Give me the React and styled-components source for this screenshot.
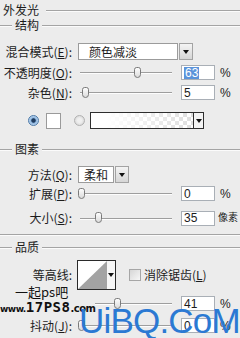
import React from 'react';
import styled, { createGlobalStyle } from 'styled-components';

const GlobalStyle = createGlobalStyle`
  html, body {
    margin: 0;
    padding: 0;
    background: #ececec;
  }
  body {
    font-family: "Noto Sans CJK SC", "Liberation Sans", sans-serif;
  }
`;

const Panel = styled.div`
  position: relative;
  width: 240px;
  height: 338px;
  overflow: hidden;
  background: #ececec;
  color: #1c1c1c;
  font-size: 12px;
  line-height: 12px;
  display: flex;
  flex-direction: column;
`;

const Legend = styled.div`
  display: flex;
  align-items: center;
  flex: none;
  height: ${(p) => p.$h || 12}px;
  margin-top: ${(p) => p.$mt || 0}px;
  padding-left: ${(p) => (p.$nested ? 0 : 3)}px;
  gap: ${(p) => (p.$nested ? 3 : 7)}px;
  white-space: nowrap;

  &::before {
    content: '';
    display: ${(p) => (p.$nested ? 'block' : 'none')};
    width: 12px;
    height: 1px;
    background: #a4a4a4;
    box-shadow: 0 1px 0 #fbfbfb;
  }

  &::after {
    content: '';
    flex: 1;
    height: 1px;
    background: #a4a4a4;
    box-shadow: 0 1px 0 #fbfbfb;
  }
`;

const Rule = styled.div`
  flex: none;
  height: 1px;
  margin-top: ${(p) => p.$mt || 0}px;
  background: #a4a4a4;
  box-shadow: 0 1px 0 #fbfbfb;
`;

const Row = styled.div`
  display: flex;
  align-items: center;
  flex: none;
  height: ${(p) => p.$h}px;
  margin-top: ${(p) => p.$mt || 0}px;
  padding-left: ${(p) => p.$pl || 0}px;
`;

const Label = styled.span`
  flex: none;
  width: 72px;
  margin-right: ${(p) => p.$gap ?? 6}px;
  text-align: right;
  white-space: nowrap;
  visibility: ${(p) => (p.$hidden ? 'hidden' : 'visible')};
`;

const Select = styled.div`
  display: flex;
  gap: 1px;
  height: 17px;
`;

const SelectField = styled.div`
  box-sizing: border-box;
  display: flex;
  align-items: center;
  width: ${(p) => p.$w}px;
  padding-left: ${(p) => p.$pad}px;
  background: #fff;
  border: 1px solid #9b9b9b;
`;

const DropButton = styled.div`
  box-sizing: border-box;
  display: flex;
  align-items: center;
  justify-content: center;
  width: 14px;
  border: 1px solid #a3a3a3;
  background: linear-gradient(#f4f4f4, #d6d6d6);
`;

const Arrow = styled.span`
  width: 0;
  height: 0;
  border-left: 3px solid transparent;
  border-right: 3px solid transparent;
  border-top: 4px solid #111;
`;

const Slider = styled.div`
  position: relative;
  flex: none;
  display: flex;
  align-items: center;
  width: 92px;
  height: 100%;
  margin-left: 2px;
`;

const Track = styled.div`
  width: 100%;
  height: 1px;
  background: #9e9e9e;
  box-shadow: 0 1px 0 #fdfdfd;
`;

const Thumb = styled.div`
  position: absolute;
  top: 50%;
  width: 7px;
  height: 11px;
  margin-top: -6px;
  box-sizing: border-box;
  border: 1px solid #7a7a7a;
  border-radius: 3px 3px 4px 4px;
  background: linear-gradient(#fdfdfd, #dcdcdc);
`;

const NumberBox = styled.div`
  box-sizing: border-box;
  display: flex;
  align-items: center;
  flex: none;
  width: 34px;
  height: 15px;
  margin-left: 9px;
  padding-left: 2px;
  background: #fff;
  border: 1px solid #a9afb6;
  font-family: "Liberation Sans", Arial, sans-serif;
  font-size: 12px;
`;

const Selected = styled.span`
  background: #5b93da;
  color: #fff;
  padding: 0 1px;
`;

const Unit = styled.span`
  margin-left: ${(p) => (p.$wide ? 3 : 5)}px;
  font-family: "Liberation Sans", "Noto Sans CJK SC", sans-serif;
  font-size: ${(p) => (p.$wide ? 10 : 12)}px;
  white-space: nowrap;
`;

const Radio = styled.span`
  flex: none;
  width: 11px;
  height: 11px;
  box-sizing: border-box;
  border-radius: 50%;
  border: 1px solid ${(p) => (p.$on ? '#4b79a8' : '#b1b1b1')};
  background: ${(p) =>
    p.$on
      ? 'radial-gradient(circle, #1f3b5e 0 28%, #8db6e0 42%, #e1ecf7 100%)'
      : 'radial-gradient(circle, #f0f0f0 0 30%, #cfcfcf 100%)'};
  margin-right: ${(p) => p.$gap}px;
`;

const Swatch = styled.span`
  flex: none;
  width: 15px;
  height: 16px;
  box-sizing: border-box;
  background: #fff;
  border: 1px solid #9a9a9a;
  margin-right: 13px;
`;

const GradientBox = styled.div`
  box-sizing: border-box;
  display: flex;
  width: 114px;
  height: 17px;
  border: 1px solid #2e2e2e;
  background: #fff;
`;

const GradientFill = styled.div`
  flex: 1;
  background-image: linear-gradient(to right, #fff 15%, rgba(255, 255, 255, 0)),
    conic-gradient(#dedede 25%, #fff 0 50%, #dedede 0 75%, #fff 0);
  background-size: 100% 100%, 8px 8px;
`;

const GradientDrop = styled.div`
  display: flex;
  align-items: center;
  justify-content: center;
  width: 9px;
  border-left: 1px solid #2e2e2e;
  background: #f4f4f4;
`;

const ContourBox = styled.div`
  box-sizing: border-box;
  display: flex;
  width: 39px;
  height: 30px;
  border: 1px solid #2a2a2a;
  background: #fff;
`;

const ContourDrop = styled.div`
  display: flex;
  align-items: center;
  justify-content: center;
  width: 8px;
  background: #f6f6f6;
`;

const Check = styled.span`
  flex: none;
  width: 12px;
  height: 12px;
  box-sizing: border-box;
  margin: 0 3px 0 13px;
  border: 1px solid #a6a6a6;
  background: linear-gradient(135deg, #d6d6d6, #f7f7f7);
`;

const StampCn = styled.div`
  position: absolute;
  left: 15px;
  top: 285px;
  font-size: 13px;
  line-height: 14px;
  color: #111;
  white-space: nowrap;
`;

const StampUrl = styled.div`
  position: absolute;
  left: 0;
  top: 301px;
  display: flex;
  align-items: baseline;
  background: #ececec;
  font-family: "DejaVu Sans", sans-serif;
  font-weight: bold;
  color: #111;
  white-space: nowrap;
  line-height: 12px;
`;

const UrlSmall = styled.span`
  font-size: ${(p) => p.$s}px;
  letter-spacing: -0.5px;
`;

const UrlBig = styled.span`
  font-size: 14px;
  letter-spacing: 0.5px;
  font-family: "DejaVu Sans Mono", monospace;
`;

const StampBlue = styled.div`
  position: absolute;
  left: 79px;
  top: 301px;
  font-family: "Liberation Sans", Arial, sans-serif;
  font-size: 35px;
  line-height: 40px;
  letter-spacing: -0.8px;
  color: #2b79d3;
  white-space: nowrap;
`;

const sliders = {
  opacity: 0.63,
  noise: 0.06,
  spread: 0.02,
  size: 0.2,
  range: 0.41,
  jitter: 0.02,
};

const SliderBar = ({ value }) => (
  <Slider>
    <Track />
    <Thumb style={{ left: value * 92 - 3.5 + 'px' }} />
  </Slider>
);

const App = () => (
  <Panel>
    <GlobalStyle />
    <Legend $h={20}>外发光</Legend>
    <Legend $nested $h={10}>结构</Legend>

    <Row $h={17} $mt={13}>
      <Label>混合模式(<u>E</u>):</Label>
      <Select>
        <SelectField $w={100} $pad={10}>颜色减淡</SelectField>
        <DropButton><Arrow /></DropButton>
      </Select>
    </Row>

    <Row $h={15} $mt={5}>
      <Label>不透明度(<u>O</u>):</Label>
      <SliderBar value={sliders.opacity} />
      <NumberBox><Selected>63</Selected></NumberBox>
      <Unit>%</Unit>
    </Row>

    <Row $h={15} $mt={5}>
      <Label>杂色(<u>N</u>):</Label>
      <SliderBar value={sliders.noise} />
      <NumberBox>5</NumberBox>
      <Unit>%</Unit>
    </Row>

    <Row $h={17} $mt={12} $pl={28}>
      <Radio $on $gap={7} />
      <Swatch />
      <Radio $gap={5} />
      <GradientBox>
        <GradientFill />
        <GradientDrop><Arrow /></GradientDrop>
      </GradientBox>
    </Row>

    <Legend $nested $mt={14}>图素</Legend>

    <Row $h={17} $mt={11}>
      <Label>方法(<u>Q</u>):</Label>
      <Select>
        <SelectField $w={36} $pad={5}>柔和</SelectField>
        <DropButton><Arrow /></DropButton>
      </Select>
    </Row>

    <Row $h={15} $mt={3}>
      <Label>扩展(<u>P</u>):</Label>
      <SliderBar value={sliders.spread} />
      <NumberBox>0</NumberBox>
      <Unit>%</Unit>
    </Row>

    <Row $h={16} $mt={9}>
      <Label>大小(<u>S</u>):</Label>
      <SliderBar value={sliders.size} />
      <NumberBox>35</NumberBox>
      <Unit $wide>像素</Unit>
    </Row>

    <Rule $mt={8} />
    <Legend $nested $mt={6}>品质</Legend>

    <Row $h={30} $mt={7}>
      <Label $gap={5}>等高线:</Label>
      <ContourBox>
        <svg width="29" height="28" viewBox="0 0 29 28">
          <polygon points="0,28 29,0 29,28" fill="#a3a3a3" />
        </svg>
        <ContourDrop><Arrow /></ContourDrop>
      </ContourBox>
      <Check />
      <span>消除锯齿(<u>L</u>)</span>
    </Row>

    <Row $h={15} $mt={6}>
      <Label $hidden>范围(<u>R</u>):</Label>
      <SliderBar value={sliders.range} />
      <NumberBox>41</NumberBox>
      <Unit>%</Unit>
    </Row>

    <Row $h={15} $mt={7}>
      <Label>抖动(<u>J</u>):</Label>
      <SliderBar value={sliders.jitter} />
      <NumberBox>0</NumberBox>
      <Unit>%</Unit>
    </Row>

    <StampCn>一起ps吧</StampCn>
    <StampUrl>
      <UrlSmall $s={9}>www.</UrlSmall>
      <UrlBig>17PS8</UrlBig>
      <UrlSmall $s={10}>.com</UrlSmall>
    </StampUrl>
    <StampBlue>UiBQ.CoM</StampBlue>
  </Panel>
);

export default App;
